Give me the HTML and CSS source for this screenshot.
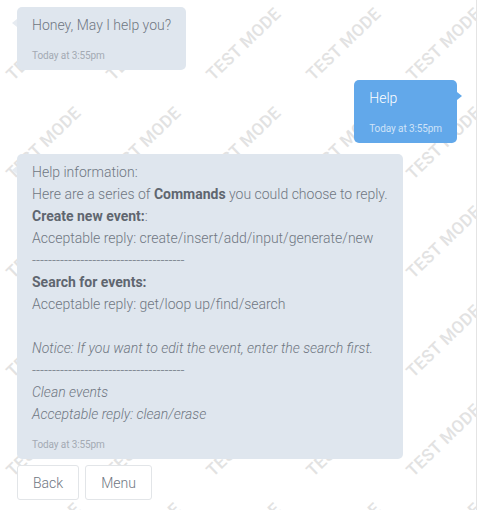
FILE: index.html
```html
<!DOCTYPE html>
<html lang="en">
<head>
<meta charset="utf-8">
<title>Chat</title>
<link rel="stylesheet" href="styles.css">
</head>
<body>
<div class="frame">
  <div class="watermarks" aria-hidden="true">
    <span class="wm"><span>TEST MODE</span></span><span class="wm"><span>TEST MODE</span></span><span class="wm"><span>TEST MODE</span></span><span class="wm"><span>TEST MODE</span></span><span class="wm"><span>TEST MODE</span></span>
    <span class="wm"><span>TEST MODE</span></span><span class="wm"><span>TEST MODE</span></span><span class="wm"><span>TEST MODE</span></span><span class="wm"><span>TEST MODE</span></span><span class="wm"><span>TEST MODE</span></span>
    <span class="wm"><span>TEST MODE</span></span><span class="wm"><span>TEST MODE</span></span><span class="wm"><span>TEST MODE</span></span><span class="wm"><span>TEST MODE</span></span><span class="wm"><span>TEST MODE</span></span>
    <span class="wm"><span>TEST MODE</span></span><span class="wm"><span>TEST MODE</span></span><span class="wm"><span>TEST MODE</span></span><span class="wm"><span>TEST MODE</span></span><span class="wm"><span>TEST MODE</span></span>
    <span class="wm"><span>TEST MODE</span></span><span class="wm"><span>TEST MODE</span></span><span class="wm"><span>TEST MODE</span></span><span class="wm"><span>TEST MODE</span></span><span class="wm"><span>TEST MODE</span></span>
    <span class="wm"><span>TEST MODE</span></span><span class="wm"><span>TEST MODE</span></span><span class="wm"><span>TEST MODE</span></span><span class="wm"><span>TEST MODE</span></span><span class="wm"><span>TEST MODE</span></span>
  </div>

  <div class="chat">
    <div class="row row-in">
      <div class="bubble bubble-in">
        <div class="line">Honey, May I help you?</div>
        <div class="time">Today at 3:55pm</div>
      </div>
    </div>

    <div class="row row-out">
      <div class="bubble bubble-out">
        <div class="line">Help</div>
        <div class="time">Today at 3:55pm</div>
      </div>
    </div>

    <div class="row row-in big">
      <div class="bubble bubble-in">
        <div class="line">Help information:</div>
        <div class="line">Here are a series of <b>Commands</b> you could choose to reply.</div>
        <div class="line"><b>Create new event:</b>:</div>
        <div class="line">Acceptable reply: create/insert/add/input/generate/new</div>
        <div class="line dash">--------------------------------------</div>
        <div class="line"><b>Search for events:</b></div>
        <div class="line">Acceptable reply: get/loop up/find/search</div>
        <div class="line">&nbsp;</div>
        <div class="line"><i>Notice: If you want to edit the event, enter the search first.</i></div>
        <div class="line dash">--------------------------------------</div>
        <div class="line"><i>Clean events</i></div>
        <div class="line"><i>Acceptable reply: clean/erase</i></div>
        <div class="time">Today at 3:55pm</div>
      </div>
    </div>

    <div class="actions">
      <button class="btn" type="button">Back</button>
      <button class="btn" type="button">Menu</button>
    </div>
  </div>
</div>
</body>
</html>
```

FILE: styles.css
```css
* { box-sizing: border-box; }

html, body {
  margin: 0;
  padding: 0;
  background: #ffffff;
}

body {
  font-family: Roboto, "Liberation Sans", Arial, sans-serif;
  font-size: 14px;
  font-weight: 300;
  color: #6f7782;
}

.frame {
  position: relative;
  width: 477px;
  height: 510px;
  border-right: 1px solid #e4e4e4;
  overflow: hidden;
}

.watermarks {
  position: absolute;
  top: -17px;
  left: 14px;
  display: grid;
  grid-template-columns: repeat(5, 100px);
  grid-auto-rows: 99px;
  z-index: 0;
}

.wm {
  display: flex;
  align-items: flex-end;
}

.wm span {
  display: block;
  font-size: 17px;
  font-weight: 500;
  line-height: 13px;
  color: #e2e2e2;
  white-space: nowrap;
  letter-spacing: 0.4px;
  transform: rotate(-44deg);
  transform-origin: 0 100%;
}

.chat {
  position: relative;
  z-index: 1;
  display: flex;
  flex-direction: column;
  padding: 7px 19px 0 17px;
}

.row {
  display: flex;
}

.row-out {
  justify-content: flex-end;
  margin-top: 10px;
}

.big {
  margin-top: 11px;
}

.bubble {
  position: relative;
  border-radius: 5px;
  padding: 7px 15px 8px;
}

.bubble::before {
  content: "";
  position: absolute;
  top: 12px;
  border-top: 4px solid transparent;
  border-bottom: 4px solid transparent;
}

.bubble-in {
  background: #dfe6ee;
}

.bubble-in::before {
  left: -5px;
  border-right: 5px solid #e6ebf1;
}

.bubble-out {
  background: #62a8ea;
  color: #ffffff;
}

.bubble-out::before {
  right: -5px;
  border-left: 5px solid #62a8ea;
}

.line {
  line-height: 22px;
  white-space: nowrap;
}

.line b {
  font-weight: 700;
  color: #5f6670;
}

.time {
  margin-top: 14px;
  font-size: 10px;
  font-weight: 400;
  line-height: 12px;
  letter-spacing: -0.1px;
  color: #a3aab3;
}

.bubble-out .time {
  color: #cfe3f8;
}

.actions {
  display: flex;
  gap: 6px;
  margin-top: 6px;
}

.btn {
  height: 35px;
  padding: 0 15px;
  border: 1px solid #e2e5e8;
  border-radius: 3px;
  background: #ffffff;
  font-family: Roboto, "Liberation Sans", Arial, sans-serif;
  font-size: 14px;
  font-weight: 300;
  color: #6f7782;
}
```
